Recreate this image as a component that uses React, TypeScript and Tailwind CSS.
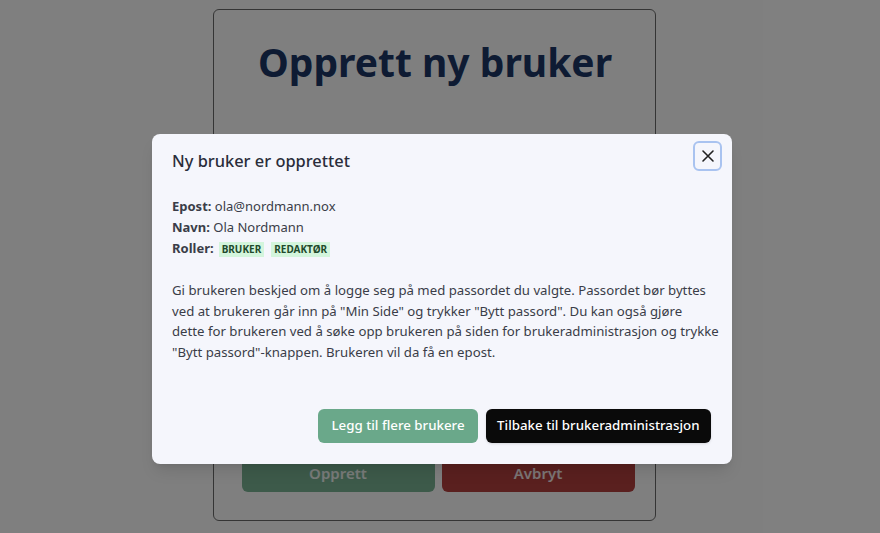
import React from "react";

export default function App() {
  const font = { fontFamily: '"Noto Sans", "Open Sans", sans-serif' };
  return (
    <div className="relative w-[880px] h-[533px] bg-white overflow-hidden" style={font}>
      {/* background page */}
      <div className="flex justify-center pt-[9px] pr-[12px]">
        <div className="w-[443px] h-[512px] border border-[#6b6b6b] rounded-md flex flex-col pl-[28px] pr-[20px]">
          <h1 className="text-[39px] font-bold text-[#1c3766] text-center mt-[24px] leading-[56px] pr-[6px]">Opprett ny bruker</h1>
          <div className="mt-[40px] text-[15px] font-semibold text-black leading-5">Brukernavn</div>
          <div className="flex-1" />
          <div className="flex gap-[7px] mb-[28px]">
            <button className="flex-1 h-[37px] rounded-md bg-[#7ab494] text-white/90 font-semibold text-[15px]">Opprett</button>
            <button className="flex-1 h-[37px] rounded-md bg-[#b4403e] text-white/90 font-semibold text-[15px]">Avbryt</button>
          </div>
        </div>
      </div>

      {/* overlay */}
      <div className="absolute inset-0 bg-black/50 flex justify-center pt-[134px] pl-[4px]">
        <div className="relative w-[580px] h-[330px] bg-[#f5f6fc] rounded-lg shadow-lg flex flex-col pl-[20px] pr-[21px] pt-[14px] pb-[21px]">
          <button className="absolute top-[7px] right-[10px] w-[29px] h-[30px] rounded-md border-2 border-[#a9c3f0] flex items-center justify-center text-[#222]">
            <svg width="14" height="14" viewBox="0 0 14 14" fill="none" stroke="currentColor" strokeWidth="1.6" strokeLinecap="round">
              <path d="M2 2 L12 12 M12 2 L2 12" />
            </svg>
          </button>
          <h2 className="text-[16.4px] font-medium text-[#2a2d3a] leading-[26px]">Ny bruker er opprettet</h2>
          <div className="mt-[22px] text-[13px] text-[#3a3d48] leading-[21px]">
            <div><span className="font-bold">Epost:</span> ola@nordmann.nox</div>
            <div><span className="font-bold">Navn:</span> Ola Nordmann</div>
            <div className="flex items-center">
              <span className="font-bold">Roller:</span>
              <span className="ml-[5px] bg-[#d3f5dc] text-[#1f4a2c] text-[10px] font-bold px-[3px] leading-[15px] mt-[1px]">BRUKER</span>
              <span className="ml-[7px] bg-[#d3f5dc] text-[#1f4a2c] text-[10px] font-bold px-[3px] leading-[15px] mt-[1px]">REDAKTØR</span>
            </div>
          </div>
          <p className="mt-[21px] whitespace-nowrap text-[13.2px] text-[#3a3d48] leading-[20.7px]">
            Gi brukeren beskjed om å logge seg på med passordet du valgte. Passordet bør byttes<br />
            ved at brukeren går inn på "Min Side" og trykker "Bytt passord". Du kan også gjøre<br />
            dette for brukeren ved å søke opp brukeren på siden for brukeradministrasjon og trykke<br />
            "Bytt passord"-knappen. Brukeren vil da få en epost.
          </p>
          <div className="flex-1" />
          <div className="flex justify-end gap-[8px]">
            <button className="h-[34px] px-[13px] rounded-md bg-[#6aa88a] text-white text-[13.3px] font-medium">Legg til flere brukere</button>
            <button className="h-[34px] px-[11.5px] rounded-md bg-[#0a0a0a] text-white text-[13.3px] font-medium shadow">Tilbake til brukeradministrasjon</button>
          </div>
        </div>
      </div>
    </div>
  );
}
